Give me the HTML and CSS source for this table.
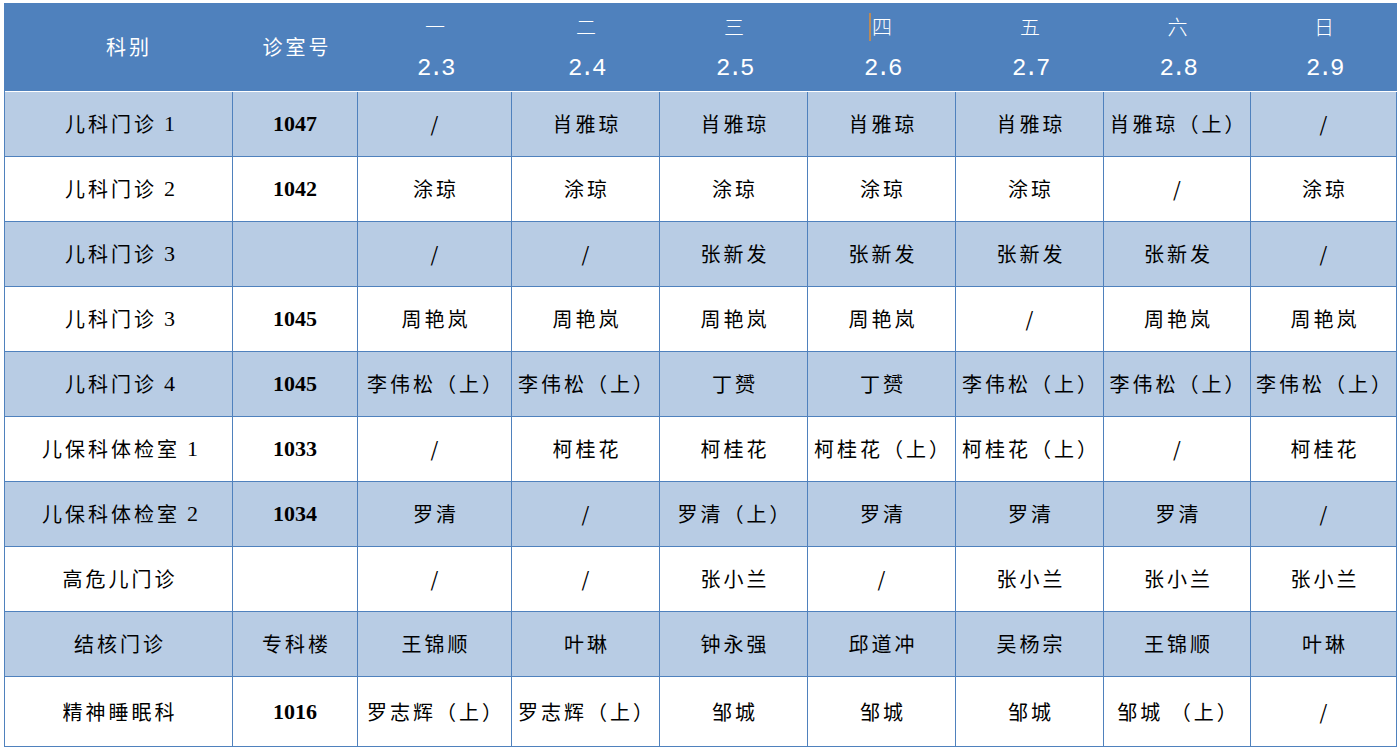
FILE: index.html
```html
<!DOCTYPE html>
<html lang="zh-CN">
<head>
<meta charset="utf-8">
<title>门诊排班表</title>
<link rel="stylesheet" href="styles.css">
</head>
<body>
<div class="schedule" role="table">
  <div class="row head" role="row">
    <div class="cell hc first" role="columnheader">科别</div>
    <div class="cell hc" role="columnheader">诊室号</div>
    <div class="cell hc day" role="columnheader"><span class="wd">一</span><span class="date">2.3</span></div>
    <div class="cell hc day" role="columnheader"><span class="wd">二</span><span class="date">2.4</span></div>
    <div class="cell hc day" role="columnheader"><span class="wd">三</span><span class="date">2.5</span></div>
    <div class="cell hc day" role="columnheader"><span class="wd"><span class="caret" aria-hidden="true"></span>四</span><span class="date">2.6</span></div>
    <div class="cell hc day" role="columnheader"><span class="wd">五</span><span class="date">2.7</span></div>
    <div class="cell hc day" role="columnheader"><span class="wd">六</span><span class="date">2.8</span></div>
    <div class="cell hc day" role="columnheader"><span class="wd">日</span><span class="date">2.9</span></div>
  </div>

  <div class="row alt" role="row">
    <div class="cell name">儿科门诊<span class="n">1</span></div>
    <div class="cell room">1047</div>
    <div class="cell">/</div><div class="cell">肖雅琼</div><div class="cell">肖雅琼</div><div class="cell">肖雅琼</div><div class="cell">肖雅琼</div><div class="cell">肖雅琼（上）</div><div class="cell">/</div>
  </div>
  <div class="row" role="row">
    <div class="cell name">儿科门诊<span class="n">2</span></div>
    <div class="cell room">1042</div>
    <div class="cell">涂琼</div><div class="cell">涂琼</div><div class="cell">涂琼</div><div class="cell">涂琼</div><div class="cell">涂琼</div><div class="cell">/</div><div class="cell">涂琼</div>
  </div>
  <div class="row alt" role="row">
    <div class="cell name">儿科门诊<span class="n">3</span></div>
    <div class="cell room"></div>
    <div class="cell">/</div><div class="cell">/</div><div class="cell">张新发</div><div class="cell">张新发</div><div class="cell">张新发</div><div class="cell">张新发</div><div class="cell">/</div>
  </div>
  <div class="row" role="row">
    <div class="cell name">儿科门诊<span class="n">3</span></div>
    <div class="cell room">1045</div>
    <div class="cell">周艳岚</div><div class="cell">周艳岚</div><div class="cell">周艳岚</div><div class="cell">周艳岚</div><div class="cell">/</div><div class="cell">周艳岚</div><div class="cell">周艳岚</div>
  </div>
  <div class="row alt" role="row">
    <div class="cell name">儿科门诊<span class="n">4</span></div>
    <div class="cell room">1045</div>
    <div class="cell">李伟松（上）</div><div class="cell">李伟松（上）</div><div class="cell">丁赟</div><div class="cell">丁赟</div><div class="cell">李伟松（上）</div><div class="cell">李伟松（上）</div><div class="cell">李伟松（上）</div>
  </div>
  <div class="row" role="row">
    <div class="cell name">儿保科体检室<span class="n">1</span></div>
    <div class="cell room">1033</div>
    <div class="cell">/</div><div class="cell">柯桂花</div><div class="cell">柯桂花</div><div class="cell">柯桂花（上）</div><div class="cell">柯桂花（上）</div><div class="cell">/</div><div class="cell">柯桂花</div>
  </div>
  <div class="row alt" role="row">
    <div class="cell name">儿保科体检室<span class="n">2</span></div>
    <div class="cell room">1034</div>
    <div class="cell">罗清</div><div class="cell">/</div><div class="cell">罗清（上）</div><div class="cell">罗清</div><div class="cell">罗清</div><div class="cell">罗清</div><div class="cell">/</div>
  </div>
  <div class="row" role="row">
    <div class="cell name">高危儿门诊</div>
    <div class="cell room"></div>
    <div class="cell">/</div><div class="cell">/</div><div class="cell">张小兰</div><div class="cell">/</div><div class="cell">张小兰</div><div class="cell">张小兰</div><div class="cell">张小兰</div>
  </div>
  <div class="row alt" role="row">
    <div class="cell name">结核门诊</div>
    <div class="cell">专科楼</div>
    <div class="cell">王锦顺</div><div class="cell">叶琳</div><div class="cell">钟永强</div><div class="cell">邱道冲</div><div class="cell">吴杨宗</div><div class="cell">王锦顺</div><div class="cell">叶琳</div>
  </div>
  <div class="row last" role="row">
    <div class="cell name">精神睡眠科</div>
    <div class="cell room">1016</div>
    <div class="cell">罗志辉（上）</div><div class="cell">罗志辉（上）</div><div class="cell">邹城</div><div class="cell">邹城</div><div class="cell">邹城</div><div class="cell">邹城 （上）</div><div class="cell">/</div>
  </div>
</div>
</body>
</html>
```

FILE: styles.css
```css
html, body {
  margin: 0;
  padding: 0;
  background: #ffffff;
}

body {
  font-family: "Noto Sans CJK SC", "Noto Sans", sans-serif;
  color: #000000;
}

.schedule {
  margin: 3px 0 0 4px;
  width: 1393px;
  display: grid;
  grid-template-columns: 228px 125px 154px 148px 148px 148px 148px 147px 146px;
  grid-template-rows: 89px repeat(9, 65px) 70px;
  border-left: 1px solid #4f81bd;
  box-sizing: border-box;
}

.row {
  display: contents;
}

.cell {
  box-sizing: border-box;
  border-right: 1px solid #4f81bd;
  border-bottom: 1px solid #4f81bd;
  display: flex;
  align-items: center;
  justify-content: center;
  font-size: 20px;
  line-height: 24px;
  letter-spacing: 3px;
  white-space: nowrap;
  background: #ffffff;
  padding-left: 3px;
}

.row.alt .cell {
  background: #b8cce4;
}

.head .cell {
  background: #4f81bd;
  color: #ffffff;
  border-right: none;
  border-bottom: 1px solid #ffffff;
  font-size: 20px;
  letter-spacing: 3px;
}

.head .first {
  padding-left: 20px;
}

.head .day {
  flex-direction: column;
  justify-content: flex-start;
  padding-top: 12px;
  padding-left: 0;
}

.wd {
  display: flex;
  align-items: center;
  height: 24px;
  line-height: 24px;
  font-weight: 300;
  letter-spacing: 0;
}

.caret {
  display: inline-block;
  width: 2px;
  height: 28px;
  background: #b98a5a;
  margin-right: 1px;
  margin-left: -3px;
}

.date {
  margin-top: 18px;
  font-family: "Liberation Mono", "DejaVu Sans Mono", monospace;
  font-size: 24px;
  line-height: 24px;
  letter-spacing: -2.4px;
}

.name .n {
  font-family: "Liberation Serif", serif;
  font-size: 22px;
  margin-left: 7px;
  letter-spacing: 0;
}

.room {
  font-family: "Liberation Serif", serif;
  font-weight: bold;
  font-size: 22px;
  letter-spacing: 0;
  padding-left: 0;
}
```
